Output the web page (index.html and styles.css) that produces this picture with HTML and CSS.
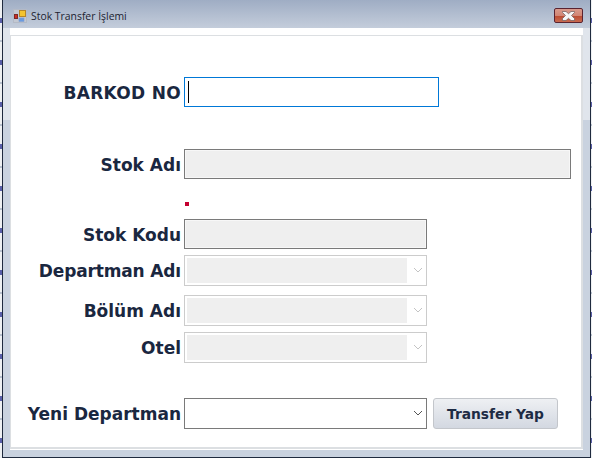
FILE: index.html
```html
<!DOCTYPE html>
<html lang="tr">
<head>
    <meta charset="UTF-8">
    <title>Stok Transfer İşlemi</title>
    <link rel="stylesheet" href="styles.css">
</head>
<body>
    <div class="window">
        <div class="title-bar">
            <svg class="app-icon" width="14" height="14" viewBox="0 0 14 14">
                <rect x="0.5" y="0.5" width="13" height="13" fill="#c3c8d2" stroke="#b4bac6"/>
                <rect x="6.500" y="1.500" width="6" height="6" fill="#f4c430" stroke="#b5862a"/>
                <rect x="1.500" y="5.500" width="3" height="4" fill="#d02c20" stroke="#7a2a2a"/>
                <rect x="6" y="9" width="5" height="3.500" fill="#6a9be0" stroke="#7f9fd0" stroke-width="0.6"/>
            </svg>
            <span class="title-text">Stok Transfer İşlemi</span>
            <div class="close-btn">
                <svg width="13" height="10" viewBox="0 0 13 10">
                    <path d="M0.500 0.500h3.500l2.500 2.200 2.500-2.200h3.500v1l-3 3 3 3v2h-3.500l-2.500-2.200-2.500 2.200h-3.500v-2l3-3-3-3z" fill="#f6f6f6" stroke="#6b5a5a" stroke-width="0.7"/>
                </svg>
            </div>
        </div>
        <div class="client">
            <div class="panel">
                <div class="row row-barkod input-row">
                    <label class="field-label label-wide">BARKOD NO</label>
                    <div class="text-input focused"><span class="caret"></span></div>
                </div>
                <div class="row row-stokadi input-row">
                    <label class="field-label">Stok Adı</label>
                    <div class="text-input readonly wide"></div>
                </div>
                <div class="dot-row"><span class="red-dot"></span></div>
                <div class="row input-row">
                    <label class="field-label">Stok Kodu</label>
                    <div class="text-input readonly medium"></div>
                </div>
                <div class="row row-departman">
                    <label class="field-label label-tight">Departman Adı</label>
                    <div class="combo disabled">
                        <div class="combo-fill"></div>
                        <svg class="chevron" width="10" height="6" viewBox="0 0 10 6"><path d="M1 1l4 4 4-4" fill="none" stroke="#c4c4c4"/></svg>
                    </div>
                </div>
                <div class="row row-bolum">
                    <label class="field-label">Bölüm Adı</label>
                    <div class="combo disabled">
                        <div class="combo-fill"></div>
                        <svg class="chevron" width="10" height="6" viewBox="0 0 10 6"><path d="M1 1l4 4 4-4" fill="none" stroke="#c4c4c4"/></svg>
                    </div>
                </div>
                <div class="row row-otel">
                    <label class="field-label">Otel</label>
                    <div class="combo disabled">
                        <div class="combo-fill"></div>
                        <svg class="chevron" width="10" height="6" viewBox="0 0 10 6"><path d="M1 1l4 4 4-4" fill="none" stroke="#c4c4c4"/></svg>
                    </div>
                </div>
                <div class="row row-yeni">
                    <label class="field-label">Yeni Departman</label>
                    <div class="combo active">
                        <svg class="chevron" width="10" height="6" viewBox="0 0 10 6"><path d="M1 1l4 4 4-4" fill="none" stroke="#555"/></svg>
                    </div>
                    <button class="transfer-btn" type="button">Transfer Yap</button>
                </div>
            </div>
        </div>
    </div>
</body>
</html>
```

FILE: styles.css
```css
* {
    box-sizing: border-box;
}

html, body {
    margin: 0;
    height: 458px;
    overflow: hidden;
}

body {
    background: repeating-linear-gradient(#eef0f2 0, #eef0f2 18px, #5a5fa8 18px, #5a5fa8 23px, #eef0f2 23px, #eef0f2 40px, #b9c2cf 40px, #b9c2cf 42px);
    font-family: 'DejaVu Sans', Verdana, sans-serif;
}

.window {
    width: 589px;
    height: 458px;
    margin-left: 2px;
    background: linear-gradient(#e0e5ec 0, #e0e5ec 120px, #c9d2df 120px);
    border: 1px solid #1f2a3e;
    border-top: none;
    display: flex;
    flex-direction: column;
    padding: 0 7px 7px 7px;
}

.title-bar {
    height: 28px;
    flex-shrink: 0;
    margin: 0 -7px;
    padding: 3px 7px 0 10px;
    display: flex;
    align-items: center;
    background: linear-gradient(#9fadc4, #c4cddb);
}

.app-icon {
    margin-right: 4px;
}

.title-text {
    font-family: 'Open Sans', sans-serif;
    font-size: 10.400px;
    color: #1c2230;
}

.close-btn {
    margin-left: auto;
    width: 29px;
    height: 15px;
    border: 1px solid #5a2330;
    border-radius: 2px;
    display: flex;
    align-items: center;
    justify-content: center;
    background: linear-gradient(#d99a8c 0, #d28675 50%, #bb4a30 51%, #c96a50 100%);
}

.client {
    flex: 1;
    background: #fff;
    padding-top: 7px;
    padding-bottom: 1px;
    display: flex;
}

.panel {
    flex: 1;
    border: 1px solid #dcdfe2;
    border-bottom-width: 2px;
    border-right-width: 2px;
    background: #fff;
    display: flex;
    flex-direction: column;
}

.row {
    display: flex;
    align-items: center;
    flex-shrink: 0;
}

.field-label {
    width: 170px;
    margin-right: 3px;
    text-align: right;
    font-size: 17px;
    font-weight: bold;
    color: #1a2740;
    white-space: nowrap;
}

.input-row .field-label {
    padding-top: 2px;
}

.label-wide {
    letter-spacing: 0.3px;
}

.label-tight {
    letter-spacing: -0.15px;
}

.row-barkod { margin-top: 41px; }
.row-stokadi { margin-top: 42px; }
.row-departman { margin-top: 6px; }
.row-bolum { margin-top: 9px; }
.row-otel { margin-top: 6px; }
.row-yeni { margin-top: 35px; }

.text-input {
    width: 255px;
    height: 30px;
    border: 1px solid #7a7a7a;
    display: flex;
    align-items: center;
}

.text-input.focused {
    border-color: #0078d7;
}

.caret {
    width: 1px;
    height: 22px;
    margin-left: 3px;
    background: #000;
}

.text-input.readonly {
    background: #efefef;
    box-shadow: inset 0 0 0 1px #f7f7f7;
}

.text-input.wide {
    width: 387px;
}

.text-input.medium {
    width: 243px;
}

.dot-row {
    height: 40px;
    padding-left: 174px;
    padding-top: 23px;
    flex-shrink: 0;
}

.red-dot {
    display: block;
    width: 4px;
    height: 4px;
    background: #c40030;
}

.combo {
    width: 243px;
    height: 31px;
    display: flex;
    align-items: center;
    position: relative;
    border: 1px solid #cccccc;
    background: #fff;
    padding: 2px;
}

.combo.active {
    border-color: #7a7a7a;
}

.combo-fill {
    width: 220px;
    height: 25px;
    background: #efefef;
}

.chevron {
    position: absolute;
    right: 3px;
    top: 11px;
}

.transfer-btn {
    margin-left: 6px;
    width: 125px;
    height: 31px;
    padding: 0;
    border: 1px solid #c3c6cb;
    border-radius: 3px;
    background: linear-gradient(#eef0f3, #d3d8e1);
    font-family: 'DejaVu Sans', Verdana, sans-serif;
    font-size: 13.800px;
    font-weight: bold;
    color: #1d2b44;
}
```
